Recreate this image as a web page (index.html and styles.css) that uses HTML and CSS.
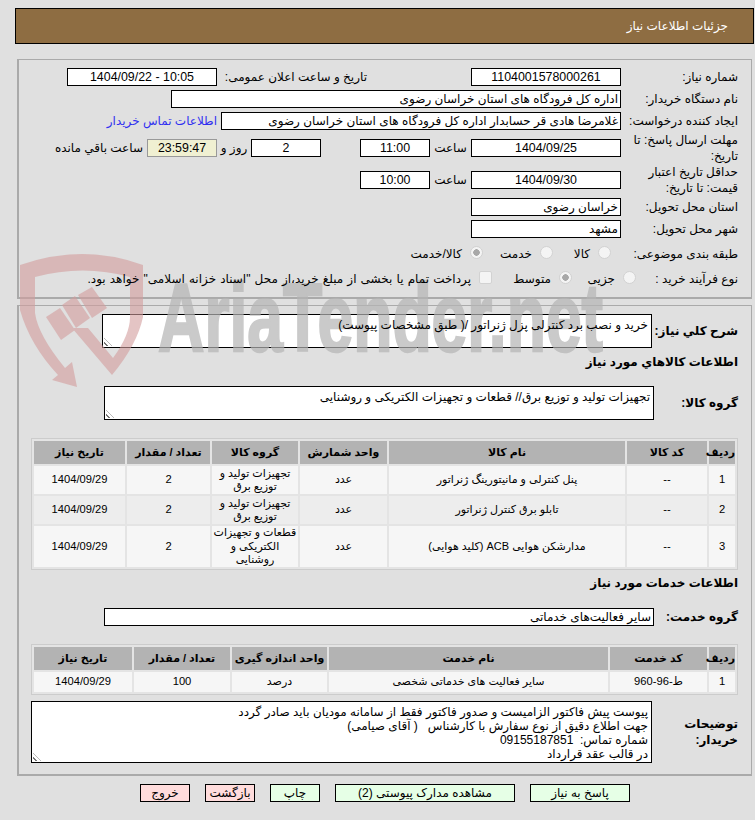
FILE: index.html
```html
<!DOCTYPE html>
<html lang="fa" dir="rtl">
<head>
<meta charset="utf-8">
<title>جزئیات اطلاعات نیاز</title>
<link rel="stylesheet" href="styles.css">
</head>
<body>
<div class="page">
  <svg class="watermark" width="620" height="160" viewBox="0 240 620 160">
    <g class="wm-red">
      <path d="M20 265 Q83 243 143 265 L143 317 Q137 345 112 375 L72 328 L88 328 L113 358 Q130 335 130 317 L130 277 Q83 264 35 277 L35 313 Q38 335 65 368 L72 362 L77 387 L52 380 L58 375 Q30 345 20 310 Z"/>
      <path d="M78 295 L92 287 L107 308 L92 318 Z"/>
      <path d="M62 305 L75 296 L90 318 L76 328 Z"/>
      <path d="M46 317 L60 308 L75 330 L61 340 Z"/>
    </g>
    <text class="wm-text" x="158" y="351" textLength="445" lengthAdjust="spacingAndGlyphs">AriaTender.net</text>
  </svg>
  <header class="title-bar"><span>جزئیات اطلاعات نیاز</span></header>
  <section class="panel panel-top">
    <div class="row">
      <label class="lbl">شماره نیاز:</label>
      <div class="box w150 center num">1104001578000261</div>
      <label class="pub">تاریخ و ساعت اعلان عمومی:</label>
      <div class="box w150 center num ltr">1404/09/22 - 10:05</div>
    </div>
    <div class="row">
      <label class="lbl">نام دستگاه خریدار:</label>
      <div class="box w450">اداره کل فرودگاه های استان خراسان رضوی</div>
    </div>
    <div class="row">
      <label class="lbl">ایجاد کننده درخواست:</label>
      <div class="box w400">غلامرضا هادی قر حسابدار اداره کل فرودگاه های استان خراسان رضوی</div>
      <a class="contact" href="#">اطلاعات تماس خریدار</a>
    </div>
    <div class="row tall">
      <label class="lbl">مهلت ارسال پاسخ: تا تاریخ:</label>
      <div class="box w150 center num">1404/09/25</div>
      <span class="txt t-hour">ساعت</span>
      <div class="box w70 center num">11:00</div>
      <div class="box w70 center num days">2</div>
      <span class="txt t-day">روز و</span>
      <div class="box w70 center num timer">23:59:47</div>
      <span class="txt t-left">ساعت باقي مانده</span>
    </div>
    <div class="row tall">
      <label class="lbl">حداقل تاریخ اعتبار قیمت: تا تاریخ:</label>
      <div class="box w150 center num">1404/09/30</div>
      <span class="txt t-hour">ساعت</span>
      <div class="box w70 center num">10:00</div>
    </div>
    <div class="row">
      <label class="lbl">استان محل تحویل:</label>
      <div class="box w150">خراسان رضوی</div>
    </div>
    <div class="row">
      <label class="lbl">شهر محل تحویل:</label>
      <div class="box w150">مشهد</div>
    </div>
    <div class="row r-type">
      <label class="lbl">طبقه بندی موضوعی:</label>
      <span class="opt o1"><input type="radio" disabled><span>کالا</span></span>
      <span class="opt o2"><input type="radio" disabled><span>خدمت</span></span>
      <span class="opt o3"><input type="radio" disabled checked><span>کالا/خدمت</span></span>
    </div>
    <div class="row">
      <label class="lbl">نوع فرآیند خرید :</label>
      <span class="opt o4"><input type="radio" disabled><span>جزیی</span></span>
      <span class="opt o5"><input type="radio" disabled checked><span>متوسط</span></span>
      <span class="opt o6"><input type="checkbox" disabled><span>پرداخت تمام یا بخشی از مبلغ خرید،از محل "اسناد خزانه اسلامی" خواهد بود.</span></span>
    </div>
  </section>

  <section class="panel panel-main">
    <div class="row desc">
      <label class="lbl strong l98 single">شرح کلي نياز:</label>
      <div class="area a1"><span class="lift">خرید و نصب برد کنترلی پزل ژنراتور /( طبق مشخصات پیوست)</span><i class="grip"></i></div>
    </div>
    <h3 class="sec s1">اطلاعات کالاهاي مورد نياز</h3>
    <div class="row desc d2">
      <label class="lbl strong l96">گروه کالا:</label>
      <div class="area a2">تجهیزات تولید و توزیع برق// قطعات و تجهیزات الکتریکی و روشنایی<i class="grip"></i></div>
    </div>
    <table class="grid g1">
      <colgroup><col class="c26"><col class="c80"><col class="c236"><col class="c87"><col class="c86"><col class="c83"><col class="c91"></colgroup>
      <thead><tr><th>رديف</th><th>کد کالا</th><th>نام کالا</th><th>واحد شمارش</th><th>گروه کالا</th><th>تعداد / مقدار</th><th>تاریخ نیاز</th></tr></thead>
      <tbody>
        <tr class="h28"><td class="num">1</td><td class="num">--</td><td>پنل کنترلی و مانیتورینگ ژنراتور</td><td>عدد</td><td>تجهیزات تولید و توزیع برق</td><td class="num">2</td><td class="num">1404/09/29</td></tr>
        <tr class="h28 alt"><td class="num">2</td><td class="num">--</td><td>تابلو برق کنترل ژنراتور</td><td>عدد</td><td>تجهیزات تولید و توزیع برق</td><td class="num">2</td><td class="num">1404/09/29</td></tr>
        <tr class="h41"><td class="num">3</td><td class="num">--</td><td>مدارشکن هوایی ACB (کلید هوایی)</td><td>عدد</td><td>قطعات و تجهیزات الکتریکی و روشنایی</td><td class="num">2</td><td class="num">1404/09/29</td></tr>
      </tbody>
    </table>
    <h3 class="sec s2">اطلاعات خدمات مورد نياز</h3>
    <div class="row desc d3">
      <label class="lbl strong l96">گروه خدمت:</label>
      <div class="box w550">سایر فعالیت‌های خدماتی</div>
    </div>
    <table class="grid g2">
      <colgroup><col class="c26"><col class="c97"><col class="c279"><col class="c95"><col class="c96"><col class="c98"></colgroup>
      <thead><tr><th>رديف</th><th>کد خدمت</th><th>نام خدمت</th><th>واحد اندازه گیری</th><th>تعداد / مقدار</th><th>تاریخ نیاز</th></tr></thead>
      <tbody>
        <tr class="h20"><td class="num">1</td><td class="num">ط-96-960</td><td>سایر فعالیت های خدماتی شخصی</td><td>درصد</td><td class="num">100</td><td class="num">1404/09/29</td></tr>
      </tbody>
    </table>
    <div class="row desc d4">
      <label class="lbl strong l98">توضیحات خریدار:</label>
      <div class="area a3">پیوست پیش فاکتور الزامیست و صدور فاکتور فقط از سامانه مودیان باید صادر گردد<br>جهت اطلاع دقیق از نوع سفارش با کارشناس &nbsp; ( آقای صیامی)<br>شماره تماس: &nbsp;09155187851<br>در قالب عقد قرارداد<i class="grip"></i></div>
    </div>
  </section>

  <nav class="actions">
    <button class="btn ok b100">پاسخ به نیاز</button>
    <button class="btn ok b180">مشاهده مدارک پیوستی (2)</button>
    <button class="btn ok b50">چاپ</button>
    <button class="btn no b50">بازگشت</button>
    <button class="btn no b50">خروج</button>
  </nav>
</div>
</body>
</html>
```
FILE: styles.css
```css
* { box-sizing: border-box; }
html, body { margin: 0; padding: 0; }
body {
  background: #e0e0e0;
  color: #000;
  font-family: "Liberation Sans", "DejaVu Sans", sans-serif;
  font-size: 12px;
  height: 820px;
  overflow: hidden;
}
.page { position: relative; width: 755px; height: 820px; padding-top: 8px; }
.watermark { position: absolute; left: 0; top: 240px; z-index: 5; pointer-events: none; direction: ltr; }
.wm-red { fill: rgb(211, 157, 157); opacity: 0.6; }
.wm-text {
  font: bold 96px "Liberation Sans", sans-serif;
  fill: #b4b4b4;
  stroke: #b4b4b4;
  stroke-width: 2.5px;
  opacity: 0.7;
  direction: ltr;
}
.lift { position: relative; z-index: 6; }

.title-bar {
  height: 36px;
  margin: 0 1px 0 15px;
  background: #8e6d42;
  border: 1px solid #000;
  color: #fff;
  display: flex;
  align-items: center;
  padding-right: 25px;
}
.panel {
  margin: 0 3px 0 17px;
  border: 1px solid #aaa;
  border-width: 1px 1px 2px 2px;
}
.panel-top { margin-top: 15px; height: 240px; padding-top: 6px; }
.panel-main { margin-top: 6px; height: 471px; padding-top: 8px; }

.row { display: flex; align-items: center; height: 22px; }
.row.tall { height: 32px; }
.row.r-type { height: 28px; }
.lbl { width: 130px; flex: none; padding-right: 13px; padding-left: 4px; line-height: 16px; }
.lbl.strong { font-weight: bold; }
.lbl.l98 { width: 99px; padding-left: 0; }
.lbl.l96 { width: 97px; padding-left: 0; }
.lbl.single { white-space: nowrap; }
.box, .area { background: #fff; border: 1px solid #000; }
.box { height: 18px; line-height: 16px; padding: 0 2px; white-space: nowrap; overflow: hidden; flex: none; }
.box.num { font-size: 12.4px; }
.center { text-align: center; }
.ltr { direction: ltr; }
.w150 { width: 150px; }
.w70 { width: 70px; }
.w400 { width: 400px; }
.w450 { width: 450px; }
.w550 { width: 550px; }
.pub { width: 254px; flex: none; padding-right: 104px; white-space: nowrap; }
.contact { color: #3030f0; text-decoration: none; margin-right: 4px; white-space: nowrap; }
.txt { white-space: nowrap; }
.t-hour { width: 41px; text-align: center; flex: none; }
.days { margin-right: 39px; }
.t-day { width: 34px; text-align: center; flex: none; }
.timer { background: #f0f0d2; border-color: #999; }
.t-left { margin-right: 4px; }

.opt { display: inline-flex; align-items: center; white-space: nowrap; flex: none; }
.opt span { position: relative; z-index: 6; }
.opt input {
  appearance: none;
  margin: -4px 0 0 8px;
  width: 13px;
  height: 13px;
  flex: none;
  background: #f4f4f4;
  border: 1px solid #d2d2d2;
  border-radius: 50%;
}
.opt input[type="checkbox"] { border-radius: 2px; margin-top: -3px; }
.opt input:checked { background: radial-gradient(circle, #a8a8a8 0 3px, #f4f4f4 3.5px); }
.o1 { width: 58px; margin-right: 10px; }
.o2 { width: 70px; }
.o3 { width: 80px; }
.o4 { width: 64px; margin-right: -15px; }
.o5 { width: 80px; }
.o6 { width: 400px; word-spacing: 0.8px; }

.row.desc { height: 34px; }
.area { padding: 3px 3px 1px; line-height: 14px; overflow: hidden; position: relative; flex: none; }
.a1, .a2 { width: 550px; height: 34px; }
.a3 { width: 621px; height: 62px; }
.grip {
  position: absolute; left: 1px; bottom: 1px; width: 8px; height: 8px;
  background: repeating-linear-gradient(45deg, transparent 0 2px, #777 2px 3px);
  clip-path: polygon(0 0, 100% 100%, 0 100%);
}
.sec { margin: 0; font-size: 12px; font-weight: bold; padding-right: 13px; line-height: 16px; }
.s1 { margin-top: 6px; }
.row.d2 { margin-top: 16px; }
.s2 { margin-top: 5px; }
.row.d3 { height: 18px; margin-top: 17px; }
.row.d4 { height: 62px; margin-top: 6px; }

.grid {
  table-layout: fixed;
  border-collapse: separate;
  border-spacing: 2px;
  border: 1px solid #ccc;
  background: #e4e4e4;
  width: 707px;
  margin: 18px 13px 0 0;
  text-align: center;
}
.grid th { background: #b3b3b3; height: 23px; padding: 0; font-size: 11px; }
.grid td { background: #f6f6f6; padding: 0; line-height: 13.5px; font-size: 11px; }
.grid td.num { font-size: 11.2px; }
.grid tr.alt td { background: #ededed; }
.h28 td { height: 28px; }
.h41 td { height: 41px; }
.h20 td { height: 20px; }
.c26 { width: 26px; } .c80 { width: 80px; } .c236 { width: 236px; } .c87 { width: 87px; } .c86 { width: 86px; } .c83 { width: 83px; } .c91 { width: 91px; }
.c97 { width: 97px; } .c279 { width: 279px; } .c95 { width: 95px; } .c96 { width: 96px; } .c98 { width: 98px; }

.actions { display: flex; gap: 15px; margin: 8px 125px 0 0; }
.btn { height: 18px; border: 1px solid #000; padding: 0; font: inherit; color: #000; flex: none; }
.ok { background: #e6ffe6; }
.no { background: #ffdcdc; }
.b100 { width: 100px; } .b180 { width: 180px; } .b50 { width: 50px; }
```
